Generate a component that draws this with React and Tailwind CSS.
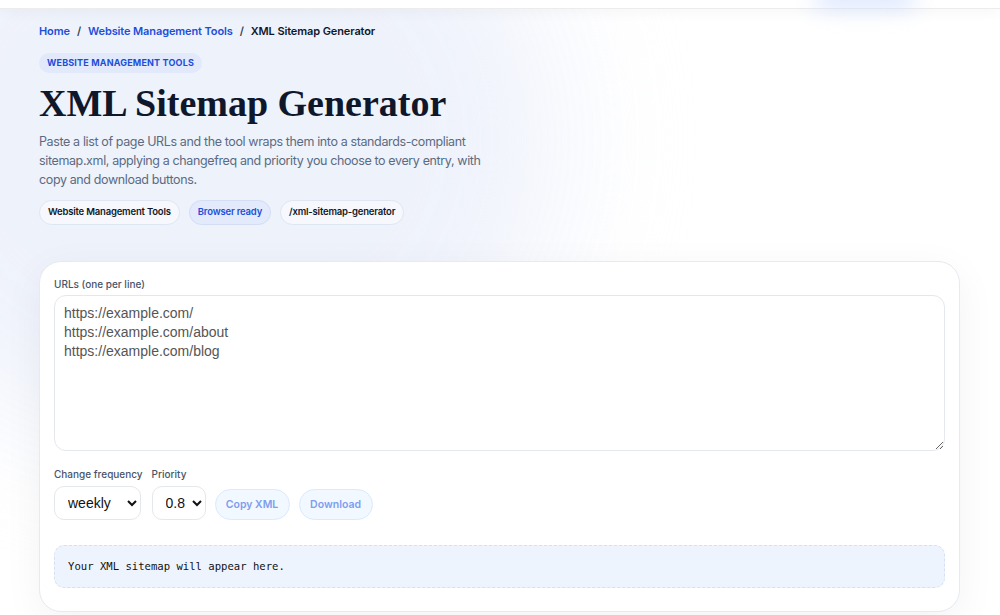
import React, { useState } from "react";

const sans = { fontFamily: "Inter, 'Noto Sans', sans-serif" };
const arial = { fontFamily: "'Liberation Sans', Arial, sans-serif" };

const Chip = ({ children, active }) => (
  <span
    className={`inline-flex items-center h-[25px] px-[8px] rounded-full border text-[9.5px] font-semibold tracking-[-0.02em] ${
      active
        ? "bg-[#e3eafc] border-[#d3ddf6] text-[#1d4ed8]"
        : "bg-[#f6f8fd] border-[#dfe6f3] text-[#111827]"
    }`}
  >
    {children}
  </span>
);

const App = () => {
  const [urls, setUrls] = useState(
    "https://example.com/\nhttps://example.com/about\nhttps://example.com/blog"
  );
  const [freq, setFreq] = useState("weekly");
  const [priority, setPriority] = useState("0.8");

  return (
    <div className="relative min-h-[615px] overflow-hidden bg-white" style={sans}>
      {/* soft background wash */}
      <div className="absolute -left-40 -top-40 w-[720px] h-[600px] rounded-full bg-[#edf1fb] blur-3xl opacity-90" />

      {/* header (scrolled) */}
      <div className="relative h-[9px] bg-white border-b border-[#ececec] shadow-[0_2px_14px_rgba(0,0,0,0.05)]">
        <div className="absolute left-[815px] -top-[10px] w-[100px] h-[16px] rounded-full bg-[#cddcfd] blur-md" />
      </div>

      <main className="relative px-[39px] pt-[14px]">
        <nav className="flex items-center gap-[7px] h-[16px] text-[11px] font-semibold tracking-[-0.01em]">
          <a className="text-[#1d4ed8]">Home</a>
          <span className="text-[#334155]">/</span>
          <a className="text-[#1d4ed8]">Website Management Tools</a>
          <span className="text-[#334155]">/</span>
          <span className="text-[#0f172a]">XML Sitemap Generator</span>
        </nav>

        <div className="mt-[14px] flex">
          <span className="inline-flex items-center h-[20px] px-[8px] rounded-full bg-[#e2e9fb] text-[#1d4ed8] text-[9px] font-bold tracking-[0.02em] uppercase">
            Website Management Tools
          </span>
        </div>

        <h1
          className="mt-[8px] text-[38px] leading-[44px] font-bold text-[#0f172a]"
          style={{ fontFamily: "'Liberation Serif', 'DejaVu Serif', serif" }}
        >
          XML Sitemap Generator
        </h1>

        <p className="mt-[7px] text-[12.5px] leading-[19px] tracking-[-0.03em] text-[#5b6b82] whitespace-nowrap">
          Paste a list of page URLs and the tool wraps them into a standards-compliant
          <br />
          sitemap.xml, applying a changefreq and priority you choose to every entry, with
          <br />
          copy and download buttons.
        </p>

        <div className="mt-[11px] flex gap-[9px]">
          <Chip>Website Management Tools</Chip>
          <Chip active>Browser ready</Chip>
          <Chip>/xml-sitemap-generator</Chip>
        </div>

        <section className="mt-[36px] w-[921px] rounded-[22px] border border-[#e6eaf1] bg-white px-[14px] pt-[15px] pb-[23px] shadow-[0_10px_40px_rgba(15,23,42,0.05)]">
          <label className="block h-[14px] leading-[14px] text-[10px] font-medium text-[#475569]">
            URLs (one per line)
          </label>
          <textarea
            value={urls}
            onChange={(e) => setUrls(e.target.value)}
            className="mt-[4px] block w-full h-[156px] rounded-[12px] border border-[#e4e7ec] px-[9px] pt-[8px] text-[14px] leading-[19px] text-[#555] outline-none"
            style={arial}
          />

          <div className="mt-[16px] flex items-end gap-[9px]">
            <div>
              <label className="block h-[14px] leading-[14px] text-[10px] font-medium text-[#475569]">
                Change frequency
              </label>
              <select
                value={freq}
                onChange={(e) => setFreq(e.target.value)}
                className="mt-[5px] h-[34px] w-[87px] rounded-[10px] border border-[#e4e7ec] bg-white pl-[9px] text-[14px] text-[#111]"
                style={arial}
              >
                <option>always</option>
                <option>hourly</option>
                <option>daily</option>
                <option>weekly</option>
                <option>monthly</option>
                <option>yearly</option>
                <option>never</option>
              </select>
            </div>
            <div>
              <label className="block h-[14px] leading-[14px] text-[10px] font-medium text-[#475569]">
                Priority
              </label>
              <select
                value={priority}
                onChange={(e) => setPriority(e.target.value)}
                className="mt-[5px] h-[34px] w-[54px] rounded-[10px] border border-[#e4e7ec] bg-white pl-[9px] text-[14px] text-[#111]"
                style={arial}
              >
                <option>1.0</option>
                <option>0.8</option>
                <option>0.5</option>
                <option>0.3</option>
              </select>
            </div>
            <button
              disabled
              className="h-[31px] w-[75px] rounded-full border border-[#dbeafe] bg-[#f1f8ff] text-[10.5px] font-semibold text-[#7f9df0]"
            >
              Copy XML
            </button>
            <button
              disabled
              className="h-[31px] w-[74px] rounded-full border border-[#dbeafe] bg-[#f1f8ff] text-[10.5px] font-semibold text-[#7f9df0]"
            >
              Download
            </button>
          </div>

          <pre
            className="mt-[25px] h-[43px] flex items-center rounded-[10px] border border-dashed border-[#d7e0ef] bg-[#eef4fe] px-[13px] text-[10.6px] text-[#111]"
            style={{ fontFamily: "'DejaVu Sans Mono', 'Liberation Mono', monospace" }}
          >
            Your XML sitemap will appear here.
          </pre>
        </section>
      </main>
    </div>
  );
};

export default App;
